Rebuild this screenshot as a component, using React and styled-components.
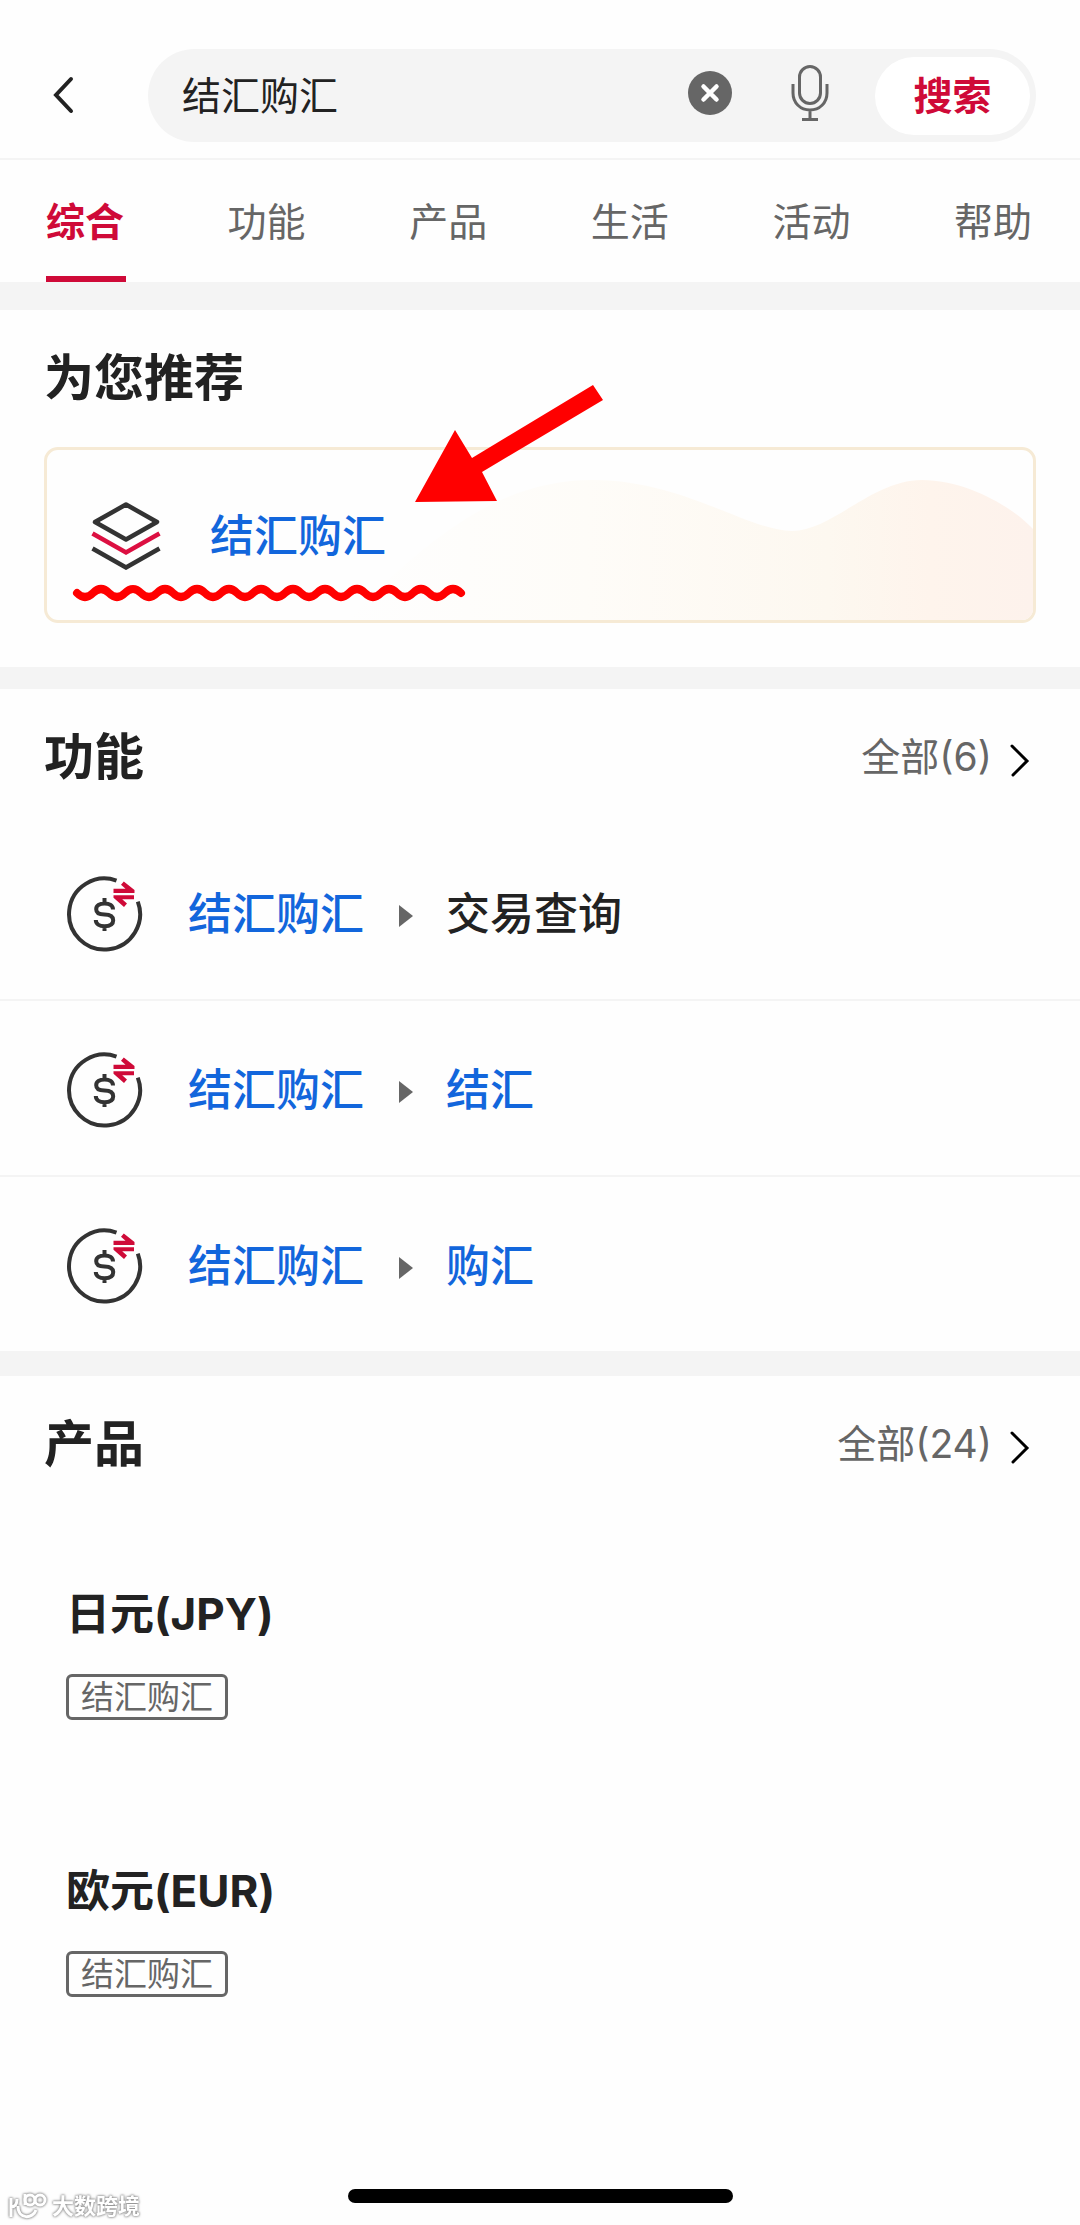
import React, { useState } from 'react'
import styled, { createGlobalStyle } from 'styled-components'

const GlobalStyle = createGlobalStyle`
  * {
    box-sizing: border-box;
  }
  body {
    margin: 0;
    background: #fefefe;
    color: #222;
    font-family: Inter, 'Noto Sans CJK SC', sans-serif;
  }
  button,
  input {
    font: inherit;
    color: inherit;
    border: 0;
    padding: 0;
    background: none;
  }
  a {
    color: inherit;
    text-decoration: none;
  }
  svg {
    display: block;
    flex: none;
  }
`
const Page = styled.div`
  min-height: 100vh;
  display: flex;
  flex-direction: column;
`
const Header = styled.header`
  display: flex;
  align-items: center;
  padding: 49px 44px 16px 0;
  border-bottom: 2px solid #f4f4f4;
`
const BackButton = styled.button`
  width: 148px;
  height: 92px;
  padding: 0 0 2px 52px;
`
const SearchBox = styled.form`
  flex: 1;
  min-width: 0;
  height: 93px;
  padding: 0 6px 0 34px;
  display: flex;
  align-items: center;
  border-radius: 47px;
  background: #f4f4f4;
`
const SearchInput = styled.input`
  flex: 1;
  min-width: 0;
  height: 78px;
  padding-bottom: 6px;
  font-size: 39px;
  outline: none;
`
const IconButton = styled.button`
  margin-right: ${({ $gap }) => $gap}px;
  padding-bottom: 6px;
`
const SubmitButton = styled.button`
  width: 155px;
  height: 78px;
  padding-bottom: 6px;
  border-radius: 39px;
  background: #fff;
  color: #cf0a38;
  font-size: 39px;
  font-weight: 700;
`
const Tabs = styled.nav`
  display: flex;
  justify-content: space-between;
  padding: 0 46px;
`
const Tab = styled.button`
  height: 122px;
  padding: 8px 2px 0 0;
  font-size: 39px;
  line-height: 108px;
  border-bottom: 6px solid ${({ $active }) => ($active ? '#cf0a38' : 'transparent')};
  color: ${({ $active }) => ($active ? '#cf0a38' : '#666')};
  font-weight: ${({ $active }) => ($active ? 700 : 400)};
`
const Section = styled.section`
  border-top: ${({ $gap }) => $gap}px solid #f4f4f4;
`
const SectionHead = styled.div`
  height: 136px;
  padding: 0 50px 0 44px;
  display: flex;
  align-items: center;
  justify-content: space-between;
`
const Title = styled.h2`
  margin: 0;
  font-size: 50px;
  line-height: 72px;
  font-weight: 600;
`
const MoreLink = styled.a`
  display: flex;
  align-items: center;
  gap: 16px;
  font-size: 39px;
  line-height: 60px;
  color: #666;
  svg {
    margin-top: 8px;
  }
`
const Card = styled.div`
  position: relative;
  height: 176px;
  margin: 1px 44px 44px;
  border: 3px solid #f6ead5;
  border-radius: 14px;
`
const CardLink = styled.a`
  position: relative;
  height: 100%;
  padding: 2px 0 0 44px;
  display: flex;
  align-items: center;
  gap: 49px;
`
const CardWave = styled.svg`
  position: absolute;
  inset: 0;
  width: 100%;
  height: 100%;
  border-radius: 11px;
`
const Arrow = styled.svg`
  position: absolute;
  left: 368px;
  top: -65px;
`
const Squiggle = styled.svg`
  position: absolute;
  left: 18px;
  bottom: 16px;
`
const Label = styled.span`
  font-size: 44px;
  line-height: 64px;
  font-weight: 500;
  color: ${({ $match }) => ($match ? '#1266dc' : '#222')};
`
const List = styled.ul`
  margin: 0;
  padding: 0;
  list-style: none;
`
const FeatureRow = styled.li`
  height: 176px;
  border-bottom: 2px solid #f4f4f4;
  &:last-child {
    height: 174px;
    border-bottom: 0;
  }
`
const FeatureLink = styled.a`
  height: 100%;
  padding: 4px 66px 0;
  display: flex;
  align-items: center;
`
const FeatureName = styled(Label)`
  margin-left: 45px;
`
const Triangle = styled.i`
  margin: 4px 33px 0 35px;
  border-left: 14px solid #666;
  border-top: 11px solid transparent;
  border-bottom: 11px solid transparent;
`
const Product = styled.li`
  height: 277px;
  padding: 70px 66px 0;
`
const ProductName = styled.h3`
  margin: 0 0 28px;
  font-size: 44px;
  line-height: 64px;
  font-weight: 700;
`
const Tag = styled.span`
  display: inline-block;
  padding: 0 12px;
  border: 3px solid #666;
  border-radius: 6px;
  color: #666;
  font-size: 33px;
  font-weight: 400;
  line-height: 40px;
`
const Footer = styled.footer`
  position: relative;
  margin-top: auto;
  padding-bottom: 22px;
`
const HomeBar = styled.div`
  width: 385px;
  height: 14px;
  margin: 0 auto;
  border-radius: 7px;
  background: #000;
`
const Watermark = styled.div`
  position: absolute;
  left: 8px;
  bottom: 4px;
  display: flex;
  align-items: center;
  gap: 5px;
  color: #fff;
  font-size: 22px;
  line-height: 30px;
  font-weight: 700;
  filter: drop-shadow(0 0 1px #888) drop-shadow(0 0 1px #aaa);
`

const tabs = ['综合', '功能', '产品', '生活', '活动', '帮助']
const features = [
  { name: '交易查询', match: false },
  { name: '结汇', match: true },
  { name: '购汇', match: true },
]
const products = ['日元(JPY)', '欧元(EUR)']

const BackIcon = () => (
  <svg width='24' height='40' viewBox='0 0 24 40' fill='none' stroke='#222' strokeWidth='4' strokeLinecap='round'>
    <path d='M19 4 4 20l15 16' />
  </svg>
)

const ClearIcon = () => (
  <svg width='44' height='44' viewBox='0 0 44 44' fill='none'>
    <circle cx='22' cy='22' r='22' fill='#666' />
    <path d='m15.500 15.500 13 13m0-13-13 13' stroke='#fff' strokeWidth='4.500' strokeLinecap='round' />
  </svg>
)

const MicIcon = () => (
  <svg width='38' height='56' viewBox='0 0 38 56' fill='none' stroke='#666' strokeWidth='3'>
    <rect x='8.500' y='1.500' width='21' height='37' rx='10.500' />
    <path d='M2 19v9c0 10 7.500 17 17 17s17-7 17-17v-9M19 45v9M11 54.500h16' />
  </svg>
)

const MoreIcon = () => (
  <svg width='22' height='36' viewBox='0 0 22 36' fill='none' stroke='#000' strokeWidth='3' strokeLinecap='round'>
    <path d='m4 3 15 15L5 32' />
  </svg>
)

const LayersIcon = () => (
  <svg width='70' height='68' viewBox='0 0 70 68' fill='none' stroke='#333' strokeWidth='4.500'>
    <path d='M35 2.500 66 20 35 37.500 4 20Z' strokeLinejoin='round' />
    <path d='m1.500 31.500 33.500 19 33.500-19' stroke='#dc0f41' />
    <path d='m1.500 46.500 33.500 19 33.500-19' />
  </svg>
)

const ExchangeIcon = () => (
  <svg width='77' height='76' viewBox='0 0 76 76' fill='none' stroke='#333' strokeWidth='4'>
    <path d='M71.300 25.600A35.500 35.500 0 1 1 50 4.600' />
    <path d='M46.500 33.500c0-4-3.500-6-8.500-6s-8.300 2-8.300 5.700 3.300 5.300 8.300 5.300 8.700 1.500 8.700 5.800-3.700 5.900-8.700 5.900-8.700-2.200-8.700-6.200M38 22v5.500M38 50v5' />
    <path
      d='M47 12.800h12l-4.500-4 2.800-3.300 10.700 8.500v3H47ZM67.500 19.200H47v2.500L57.500 31l3-3.500-4.800-4.300h11.800Z'
      fill='#cf0a38'
      stroke='none'
    />
  </svg>
)

const App = () => {
  const [query, setQuery] = useState('结汇购汇')
  const [active, setActive] = useState('综合')

  return (
    <Page>
      <GlobalStyle />
      <Header>
        <BackButton type='button' aria-label='返回'>
          <BackIcon />
        </BackButton>
        <SearchBox onSubmit={(e) => e.preventDefault()}>
          <SearchInput aria-label='搜索内容' value={query} onChange={(e) => setQuery(e.target.value)} />
          <IconButton type='button' aria-label='清除' $gap={59} onClick={() => setQuery('')}>
            <ClearIcon />
          </IconButton>
          <IconButton type='button' aria-label='语音' $gap={46}>
            <MicIcon />
          </IconButton>
          <SubmitButton type='submit'>搜索</SubmitButton>
        </SearchBox>
      </Header>
      <Tabs>
        {tabs.map((tab) => (
          <Tab key={tab} type='button' $active={tab === active} onClick={() => setActive(tab)}>
            {tab}
          </Tab>
        ))}
      </Tabs>

      <Section $gap={28}>
        <SectionHead>
          <Title>为您推荐</Title>
        </SectionHead>
        <Card>
          <CardWave viewBox='0 0 986 170' preserveAspectRatio='none'>
            <defs>
              <linearGradient id='wave' x1='0' x2='1' y1='0' y2='0'>
                <stop offset='0' stopColor='#fefefe' />
                <stop offset='0.35' stopColor='#fefcf8' />
                <stop offset='0.7' stopColor='#fdf8f0' />
                <stop offset='0.85' stopColor='#fef4ec' />
                <stop offset='1' stopColor='#fdf2ec' />
              </linearGradient>
            </defs>
            <path
              d='M300 170C380 90 450 30 546 30c90 0 155 51 199 51 40 0 80-51 130-51 45 0 92 28 111 49v91Z'
              fill='url(#wave)'
            />
          </CardWave>
          <CardLink href='#exchange'>
            <LayersIcon />
            <Label $match>结汇购汇</Label>
          </CardLink>
          <Squiggle width='412' height='20' viewBox='0 0 400 20' fill='none'>
            <path
              d={`M6 9q8 8 16 0${'t16 0'.repeat(23)}`}
              stroke='#f00'
              strokeWidth='8'
              strokeLinecap='round'
            />
          </Squiggle>
          <Arrow width='188' height='118' viewBox='0 0 188 118'>
            <path d='M178 0l10 15L67 87l15 29-82 1 40-72 17 28Z' fill='#f00' />
          </Arrow>
        </Card>
      </Section>

      <Section $gap={22}>
        <SectionHead>
          <Title>功能</Title>
          <MoreLink href='#features'>
            全部(6)
            <MoreIcon />
          </MoreLink>
        </SectionHead>
        <List>
          {features.map(({ name, match }) => (
            <FeatureRow key={name}>
              <FeatureLink href='#feature'>
                <ExchangeIcon />
                <FeatureName $match>结汇购汇</FeatureName>
                <Triangle />
                <Label $match={match}>{name}</Label>
              </FeatureLink>
            </FeatureRow>
          ))}
        </List>
      </Section>

      <Section $gap={25}>
        <SectionHead>
          <Title>产品</Title>
          <MoreLink href='#products'>
            全部(24)
            <MoreIcon />
          </MoreLink>
        </SectionHead>
        <List>
          {products.map((product) => (
            <Product key={product}>
              <ProductName>{product}</ProductName>
              <Tag>结汇购汇</Tag>
            </Product>
          ))}
        </List>
      </Section>

      <Footer>
        <HomeBar />
        <Watermark>
          <svg width='39' height='26' viewBox='0 0 39 26' fill='none' stroke='#fff' strokeWidth='3'>
            <path d='M3 5v19M3 14c4 0 6-3 6-8M10 13c0 14 15 13 18 4' />
            <circle cx='22' cy='7' r='5' />
            <circle cx='32' cy='7' r='5' />
            <path d='M17 1v11' />
          </svg>
          大数跨境
        </Watermark>
      </Footer>
    </Page>
  )
}

export default App
